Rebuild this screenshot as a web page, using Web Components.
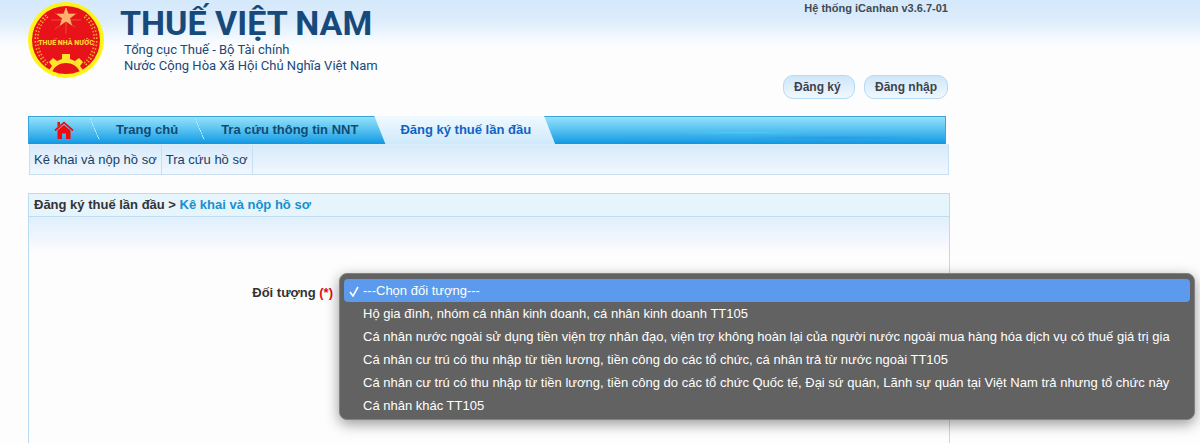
<!DOCTYPE html>
<html lang="vi">
<head>
<meta charset="utf-8">
<meta name="viewport" content="width=device-width, initial-scale=1">
<title>Thuế Việt Nam</title>
<style>
  body { margin: 0; min-height: 100vh; background: #fdfdfd linear-gradient(#d4e9fb 0, #dcecfb 20px, #f5faff 40px, #fdfdfd 48px) no-repeat; background-size: 100% 48px; font: 13px/16px "Liberation Sans", Arial, sans-serif; color: #333; overflow: hidden; }
</style>
</head>
<body>
<tax-page></tax-page>
<script>
const define = (name, html) => customElements.define(name, class extends HTMLElement {
  constructor() {
    super();
    const t = document.createElement('template');
    t.innerHTML = html;
    this.attachShadow({ mode: 'open' }).append(t.content.cloneNode(true));
  }
});

define('tax-emblem', `
<style>:host{display:block}svg{display:block;width:76px;height:78px}</style>
<svg viewBox="1 0 76 78" role="img" aria-label="Thuế Nhà Nước">
  <circle cx="39" cy="40" r="38" fill="#fff31a"/>
  <circle cx="39" cy="40" r="34" fill="#e8121b"/>
  <g stroke="#e8502e" stroke-width="1"><path d="M39 8v26M28 13l20 14M50 13L28 29M24 20h30"/></g>
  <path d="M39 8l2.200 6h6.800l-5.400 4.200 2 6.800-5.600-4-5.600 4 2-6.800-5.400-4.200h6.800z" fill="#ffb06a" stroke="#ffd27a" stroke-width=".5"/>
  <g fill="none" stroke="#f5b02a" stroke-width="4" stroke-dasharray="1.500 2">
    <path d="M20 16C6 28 6 51 20 64"/><path d="M58 16C72 28 72 51 58 64"/>
  </g>
  <g fill="none" stroke="#e8121b" stroke-width="1"><path d="M20 16C6 28 6 51 20 64"/><path d="M58 16C72 28 72 51 58 64"/></g>
  <path d="M22 70l3-4-3-4 4-4 4 3 5-2v-5h8v5l5 2 4-3 4 4-3 4 3 4-3 2C48 60 30 60 25 72z" fill="#ffe52a"/>
  <text x="39" y="45" text-anchor="middle" font-family="Roboto, sans-serif" font-weight="900" font-size="7" fill="#ffd52a">THUẾ NHÀ NƯỚC</text>
</svg>`);

define('pill-button', `
<style>
:host{display:block}
button{display:block;height:24px;min-width:72px;padding:0 10px;border:1px solid #b5daf3;border-radius:10px;background:linear-gradient(#cfe6f9,#f1f8fe);font:bold 12px/22px "Liberation Sans",Arial,sans-serif;color:#3c444b;text-align:left;cursor:pointer}
</style><button type="button"><slot></slot></button>`);

define('site-header', `
<style>
:host{display:flex;justify-content:space-between;height:116px;box-sizing:border-box}
.brand{display:flex;gap:16px;color:#174a7a;font-family:Roboto,sans-serif}
h1{margin:4px 0 0;font-size:34px;line-height:38px;font-weight:700}
p{margin:0;padding-left:4px;font-size:13px;line-height:16px}
.side{display:flex;flex-direction:column;justify-content:space-between;align-items:flex-end;padding:0 2px 17px 0}
.version{font-size:11px;font-weight:bold;line-height:16px;color:#414a52}
.actions{display:flex;gap:9px}
</style>
<div class="brand"><tax-emblem></tax-emblem>
<div><h1>THUẾ VIỆT NAM</h1><p>Tổng cục Thuế - Bộ Tài chính</p><p>Nước Cộng Hòa Xã Hội Chủ Nghĩa Việt Nam</p></div></div>
<div class="side"><span class="version">Hệ thống iCanhan v3.6.7-01</span>
<div class="actions"><pill-button>Đăng ký</pill-button><pill-button>Đăng nhập</pill-button></div></div>`);

define('main-nav', `
<style>
:host{display:block}
nav{display:flex;height:28px;box-sizing:border-box;margin-right:4px;border:1px solid #3aa5dc;border-bottom-color:#1596dd;background:
 radial-gradient(ellipse at 70% 110%,#1468dcaa 0,transparent 10%),
 radial-gradient(ellipse at 88% 80%,#2390e499 0,transparent 8%),
 radial-gradient(ellipse at 78% 60%,#45cdf5 0,transparent 7%),
 linear-gradient(#94e2fa,#50bdef 55%,#159be4)}
a{display:flex;align-items:center;box-sizing:border-box;padding:0 16px 0 27px;color:#124a74;font-weight:bold;text-decoration:none;margin:-1px 0}
a.home{width:60px;padding:0 0 0 25px}
a.sep{background:linear-gradient(67deg,transparent 48%,#b6e8fb 49%,#b6e8fb 52%,transparent 53%) 0 2px/11px 22px no-repeat}
a.active{padding:0 24px 0 26px;color:#1262c4;background:linear-gradient(#f0f9ff,#cfe9fb);clip-path:polygon(0 0,calc(100% - 11px) 0,100% 100%,11px 100%)}
svg{display:block;width:20px;height:18px}
.sub{display:flex;height:31px;box-sizing:border-box;margin:0 1px;border:1px solid #c7dff1;border-top-color:#d9f0fc;background:linear-gradient(#d7eafb,#f1f7fe)}
.sub a{margin:0;padding:0 4px;font-weight:normal;color:#174167;border-right:1px solid #c9dfef}
</style>
<nav aria-label="Menu chính">
<a class="home" href="#" aria-label="Trang nhà"><svg viewBox="0 0 20 18"><path d="M3.500 9.500L10 4l6.500 5.500V18h-4.500v-5.500H8V18H3.500z" fill="#f00a0d"/><path d="M1 9.500L10 1.700l9 7.800" fill="none" stroke="#f00a0d" stroke-width="1.700"/><path d="M3.500 1h2.500v3l-2.500 2z" fill="#f00a0d"/></svg></a>
<a class="sep" href="#">Trang chủ</a><a class="sep" href="#">Tra cứu thông tin NNT</a><a class="active" href="#" aria-current="page">Đăng ký thuế lần đầu</a>
</nav>
<div class="sub"><a href="#">Kê khai và nộp hồ sơ</a><a href="#">Tra cứu hồ sơ</a></div>`);

define('subject-select', `
<style>
:host{display:flex;align-items:center;position:relative;height:24px}
label{width:304px;text-align:right;font-weight:bold;color:#333}
b{color:#e01010}
select{position:absolute;left:310px;top:-8px;z-index:2;box-sizing:border-box;height:147px;width:max-content;margin:0;padding:5px 4px 2px;border:1px solid #828282;border-radius:8px;outline:0;background:#626262;box-shadow:0 4px 14px #0006;color:#fff;font:13px/16px "Liberation Sans",Arial,sans-serif;overflow:hidden;scrollbar-width:none}
option{min-height:0;height:23px;box-sizing:border-box;padding:4px 20px 3px 19px;border-radius:4px;line-height:16px;color:#fff}
option:checked{color:#fff;background:url("data:image/svg+xml,%3Csvg xmlns='http://www.w3.org/2000/svg' width='10' height='11'%3E%3Cpath d='M1 6l3 4L9 1' fill='none' stroke='white' stroke-width='1.600'/%3E%3C/svg%3E") 5px 7px no-repeat,linear-gradient(#5b9aec,#5b9aec)}
</style>
<label for="subject">Đối tượng <b>(*)</b></label>
<select id="subject" size="6">
<option selected>---Chọn đối tượng---</option>
<option>Hộ gia đình, nhóm cá nhân kinh doanh, cá nhân kinh doanh TT105</option>
<option>Cá nhân nước ngoài sử dụng tiền viện trợ nhân đạo, viện trợ không hoàn lại của người nước ngoài mua hàng hóa dịch vụ có thuế giá trị gia</option>
<option>Cá nhân cư trú có thu nhập từ tiền lương, tiền công do các tổ chức, cá nhân trả từ nước ngoài TT105</option>
<option>Cá nhân cư trú có thu nhập từ tiền lương, tiền công do các tổ chức Quốc tế, Đại sứ quán, Lãnh sự quán tại Việt Nam trả nhưng tổ chức này</option>
<option>Cá nhân khác TT105</option>
</select>`);

define('content-panel', `
<style>
:host{display:flex;flex-direction:column;flex:1;margin-top:18px;border:1px solid #b9dcf2;border-bottom:0}
header{height:22px;padding-left:5px;border-bottom:1px solid #c0dcf1;background:#e6f4fc;font-weight:bold;line-height:22px}
header a{color:#1690cf;text-decoration:none}
.body{flex:1;padding-top:64px;background:linear-gradient(#dfeffc,#f5f8fe 26px,#fdfdfd 36px)}
</style>
<header>Đăng ký thuế lần đầu &gt; <a href="#">Kê khai và nộp hồ sơ</a></header>
<div class="body"><slot></slot></div>`);

define('tax-page', `
<style>:host{display:flex;flex-direction:column;min-height:100vh;box-sizing:border-box;max-width:922px;margin-left:28px}</style>
<site-header></site-header><main-nav></main-nav>
<content-panel><subject-select></subject-select></content-panel>`);
</script>
</body>
</html>
